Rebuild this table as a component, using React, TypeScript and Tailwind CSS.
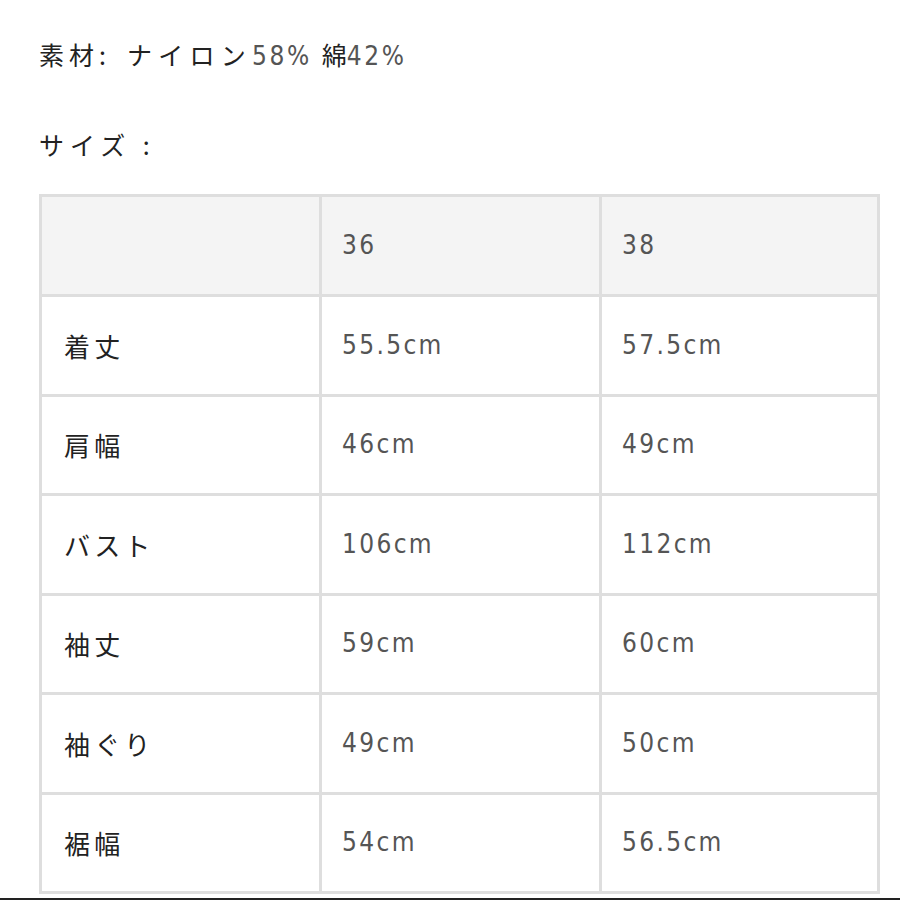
const rows: [string, string, string][] = [
  ['着丈', '55.5cm', '57.5cm'],
  ['肩幅', '46cm', '49cm'],
  ['バスト', '106cm', '112cm'],
  ['袖丈', '59cm', '60cm'],
  ['袖ぐり', '49cm', '50cm'],
  ['裾幅', '54cm', '56.5cm'],
];

const jp = { fontFamily: '"Noto Sans CJK JP", "Noto Sans", sans-serif' };
const num = { fontFamily: '"Liberation Sans Narrow", "DejaVu Sans Condensed", "Noto Sans CJK JP", sans-serif' };

const cell = 'border-[3px] border-[#dedede]';
const numCell = 'border-[3px] border-[#dedede] pl-[20px] text-[26px] tracking-[0.09em] text-[#555]';

export default function App() {
  return (
    <div className="relative h-[900px] w-[900px] overflow-hidden bg-white text-[#222]" style={jp}>
      <div className="px-[39px] pt-[34px]">
        <p className="flex items-baseline text-[25px] leading-[40px]">
          <span className="tracking-[0.2em]">素材:</span>
          <span className="ml-[16px] tracking-[0.25em]">ナイロン</span>
          <span className="text-[26px] tracking-[0.1em] text-[#555]" style={num}>58%</span>
          <span className="ml-[10px]">綿</span>
          <span className="text-[26px] tracking-[0.1em] text-[#555]" style={num}>42%</span>
        </p>
        <p className="mt-[48px] text-[25px] leading-[40px] tracking-[0.24em]">サイズ :</p>

        <table className="mt-[30px] w-[841px] border-collapse">
          <tbody>
            <tr className="h-[100px] bg-[#f4f4f4]">
              <td className={`w-[280px] ${cell}`} />
              <td className={`w-[280px] ${numCell}`} style={num}>36</td>
              <td className={numCell} style={num}>38</td>
            </tr>
            {rows.map(([label, a, b]) => (
              <tr key={label} className="h-[99.5px]">
                <td className={`${cell} pl-[22px] text-[26px] tracking-[0.16em] text-[#222]`}>{label}</td>
                <td className={numCell} style={num}>{a}</td>
                <td className={numCell} style={num}>{b}</td>
              </tr>
            ))}
          </tbody>
        </table>
      </div>
      <div className="absolute bottom-0 left-0 h-[2px] w-full bg-[#222]" />
    </div>
  );
}
